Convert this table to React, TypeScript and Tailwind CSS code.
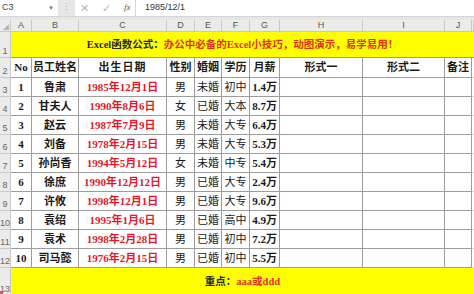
import React from 'react';

type Row = [string, string, string, string, string, string, string];

const rows: Row[] = [
  ['1', '鲁肃', '1985年12月1日', '男', '未婚', '初中', '1.4万'],
  ['2', '甘夫人', '1990年8月6日', '女', '已婚', '大本', '8.7万'],
  ['3', '赵云', '1987年7月9日', '男', '未婚', '大专', '6.4万'],
  ['4', '刘备', '1978年2月15日', '男', '未婚', '大专', '5.3万'],
  ['5', '孙尚香', '1994年5月12日', '女', '未婚', '中专', '5.4万'],
  ['6', '徐庶', '1990年12月12日', '男', '已婚', '大专', '2.4万'],
  ['7', '许攸', '1998年12月1日', '男', '已婚', '大专', '9.6万'],
  ['8', '袁绍', '1995年1月6日', '男', '已婚', '高中', '4.9万'],
  ['9', '袁术', '1998年2月28日', '男', '已婚', '初中', '7.2万'],
  ['10', '司马懿', '1976年2月15日', '男', '已婚', '初中', '5.5万'],
];

const letters = ['A', 'B', 'C', 'D', 'E', 'F', 'G', 'H', 'I', 'J', ''];

const font = "font-['Liberation_Serif','Noto_Sans_CJK_SC',serif]";

function RowNum({ n }: { n: string }) {
  return (
    <div className="flex items-end justify-center pb-[1px] bg-[#ebebeb] border-r border-b border-[#c9c9c9] text-[9px] leading-none text-[#666] font-['Liberation_Sans',sans-serif] overflow-hidden">
      {n}
    </div>
  );
}

function Cell({ children, className = '' }: { children?: React.ReactNode; className?: string }) {
  return (
    <div
      className={`flex items-center justify-center border-r border-b border-[#9c9c9c] text-[11px] leading-none text-[#1a1a1a] whitespace-nowrap overflow-hidden ${className}`}
    >
      {children}
    </div>
  );
}

export default function App() {
  return (
    <div className="w-[474px] h-[294px] overflow-hidden bg-[#e6e6e6]">
      {/* formula bar */}
      <div className="flex h-[17px] bg-white border-b border-[#d4d4d4] text-[9px] font-['Liberation_Sans',sans-serif]">
        <div className="flex w-[58px] items-center justify-between pl-[2px] pr-[4px] text-[#444]">
          <span>C3</span>
          <span className="text-[6px] text-[#777]">▼</span>
        </div>
        <div className="flex w-[17px] items-center justify-center bg-[#e6e6e6] text-[#aaa]">⋮</div>
        <div className="flex w-[61px] items-center border-r border-[#d4d4d4] text-[#b5b5b5]">
          <span className="ml-[5px] text-[11px]">✕</span>
          <span className="ml-[13px] text-[11px]">✓</span>
          <span className="ml-[13px] font-['Liberation_Serif',serif] italic text-[#555]">fx</span>
        </div>
        <div className="flex items-center pl-[9px] text-[#333]">1985/12/1</div>
      </div>
      <div className="h-[3px]" />

      {/* sheet */}
      <div
        className={`grid grid-cols-[11px_21px_47px_88px_28px_27px_28px_30px_83px_82px_27px_2px] grid-rows-[12px_26px_20px_repeat(10,19px)_27px] bg-white ${font}`}
      >
        <div className="relative bg-[#ebebeb] border-r border-b border-[#c9c9c9]">
          <div className="absolute right-[1px] bottom-[1px] w-0 h-0 border-l-[6px] border-l-transparent border-b-[6px] border-b-[#b4b4b4]" />
        </div>
        {letters.map((l, i) => (
          <div
            key={i}
            className="flex items-center justify-center bg-[#ebebeb] border-r border-b border-[#c9c9c9] text-[9px] leading-none text-[#555] font-['Liberation_Sans',sans-serif]"
          >
            {l}
          </div>
        ))}

        <RowNum n="1" />
        <div className="col-span-11 flex items-center justify-center bg-[#ffff00] border-b border-[#9c9c9c] text-[10.5px] font-bold whitespace-nowrap">
          <span className="text-[#2a2a2a]">Excel函数公式：</span>
          <span className="text-[#e2301d]">办公中必备的Excel小技巧，动图演示，易学易用！</span>
        </div>

        <RowNum n="2" />
        <Cell className="font-bold">No</Cell>
        <Cell className="font-bold">员工姓名</Cell>
        <Cell className="font-bold tracking-[1px]">出生日期</Cell>
        <Cell className="font-bold">性别</Cell>
        <Cell className="font-bold">婚姻</Cell>
        <Cell className="font-bold">学历</Cell>
        <Cell className="font-bold">月薪</Cell>
        <Cell className="font-bold">形式一</Cell>
        <Cell className="font-bold">形式二</Cell>
        <Cell className="font-bold">备注</Cell>
        <div className="border-b border-[#dcdcdc]" />

        {rows.map((r, i) => (
          <React.Fragment key={i}>
            <RowNum n={String(i + 3)} />
            <Cell className="font-bold">{r[0]}</Cell>
            <Cell className="font-bold">{r[1]}</Cell>
            <Cell className="font-bold text-[#e2192b]">{r[2]}</Cell>
            <Cell>{r[3]}</Cell>
            <Cell>{r[4]}</Cell>
            <Cell>{r[5]}</Cell>
            <Cell className="font-bold">{r[6]}</Cell>
            <Cell />
            <Cell />
            <Cell />
            <div className="border-b border-[#dcdcdc]" />
          </React.Fragment>
        ))}

        <div className="relative flex items-end justify-center pb-[1px] bg-[#ebebeb] border-r border-[#c9c9c9] text-[9px] leading-none text-[#666] font-['Liberation_Sans',sans-serif] overflow-hidden">
          13
          <div className="absolute left-0 bottom-0 w-[3px] h-[4px] bg-[#e05050]" />
        </div>
        <div className="col-span-11 flex items-center justify-center bg-[#ffff00] text-[10.5px] font-bold whitespace-nowrap">
          <span className="text-[#2a2a2a]">重点：</span>
          <span className="text-[#e2301d]">aaa或ddd</span>
        </div>
      </div>
    </div>
  );
}
